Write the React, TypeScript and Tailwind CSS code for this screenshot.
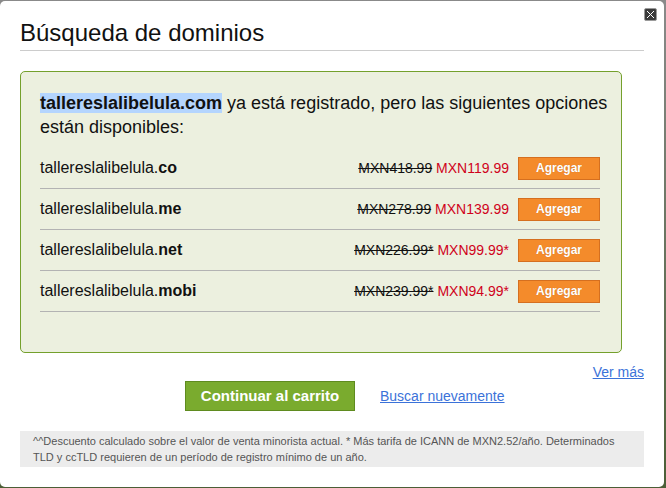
import React from "react";

const options = [
  { name: "tallereslalibelula.", tld: "co", old: "MXN418.99", price: "MXN119.99" },
  { name: "tallereslalibelula.", tld: "me", old: "MXN278.99", price: "MXN139.99" },
  { name: "tallereslalibelula.", tld: "net", old: "MXN226.99*", price: "MXN99.99*" },
  { name: "tallereslalibelula.", tld: "mobi", old: "MXN239.99*", price: "MXN94.99*" },
];

const App: React.FC = () => {
  return (
    <div className="w-[666px] h-[488px] pt-[1px] pr-[2px] pb-[1px] bg-linear-to-b from-[#8a8a8a] to-[#4b5e36] font-['Liberation_Sans',Arial,sans-serif] text-[#111]">
      <div className="relative h-full bg-white rounded-[5px] px-5 pt-[17px]">
        {/* Close button */}
        <button className="absolute top-[7px] right-[7px] w-[13px] h-[13px] bg-[#3a3a3a] border border-[#9a9a9a] rounded-[2px] flex items-center justify-center">
          <svg width="9" height="9" viewBox="0 0 9 9">
            <path d="M1 1 L8 8 M8 1 L1 8" stroke="#fff" strokeWidth="1" />
          </svg>
        </button>

        {/* Title */}
        <h1 className="text-[24px] leading-[30px] pb-[2px] border-b border-[#cccccc]">Búsqueda de dominios</h1>

        {/* Results box */}
        <div className="mt-5 w-[602px] border border-[#74a02c] bg-[#ecf0df] rounded-[5px] pl-[19px] pr-[10px] pt-[19px] pb-[40px]">
          <p className="text-[18px] leading-6">
            <span className="font-bold bg-[#b4d5fe]">tallereslalibelula.com</span> ya está registrado, pero las siguientes
            opciones están disponibles:
          </p>
          <div className="mt-[9px] w-[560px]">
            {options.map((o) => (
              <div key={o.tld} className="h-[41px] border-b border-[#b3b3b3] flex items-center">
                <span className="text-[16px]">
                  {o.name}
                  <b>{o.tld}</b>
                </span>
                <span className="ml-auto text-[14px]">
                  <span className="line-through text-[#111]">{o.old}</span>{" "}
                  <span className="text-[#d0021b]">{o.price}</span>
                </span>
                <button className="ml-[9px] w-[82px] h-[23px] bg-[#f48b2b] border border-[#d56f1f] text-white font-bold text-[12px] leading-none [text-shadow:0_0_1px_rgba(0,0,0,0.2)]">
                  Agregar
                </button>
              </div>
            ))}
          </div>
        </div>

        {/* Ver más */}
        <div className="mt-[10px] flex justify-end">
          <a href="#" className="text-[14px] leading-[18px] text-[#3b72d9] underline">
            Ver más
          </a>
        </div>

        {/* Actions */}
        <div className="flex items-center pl-[165px]">
          <button className="w-[170px] h-[30px] bg-[#7aab2e] border border-[#5f8b1f] text-white font-bold text-[15px]">
            Continuar al carrito
          </button>
          <a href="#" className="ml-[25px] text-[14px] text-[#3b72d9] underline">
            Buscar nuevamente
          </a>
        </div>

        {/* Footer note */}
        <div className="mt-5 bg-[#ececec] px-[13px] pt-[2px] pb-[2px] text-[11px] leading-4 text-[#555]">
          ^^Descuento calculado sobre el valor de venta minorista actual. * Más tarifa de ICANN de MXN2.52/año. Determinados
          TLD y ccTLD requieren de un período de registro mínimo de un año.
        </div>
      </div>
    </div>
  );
};

export default App;
